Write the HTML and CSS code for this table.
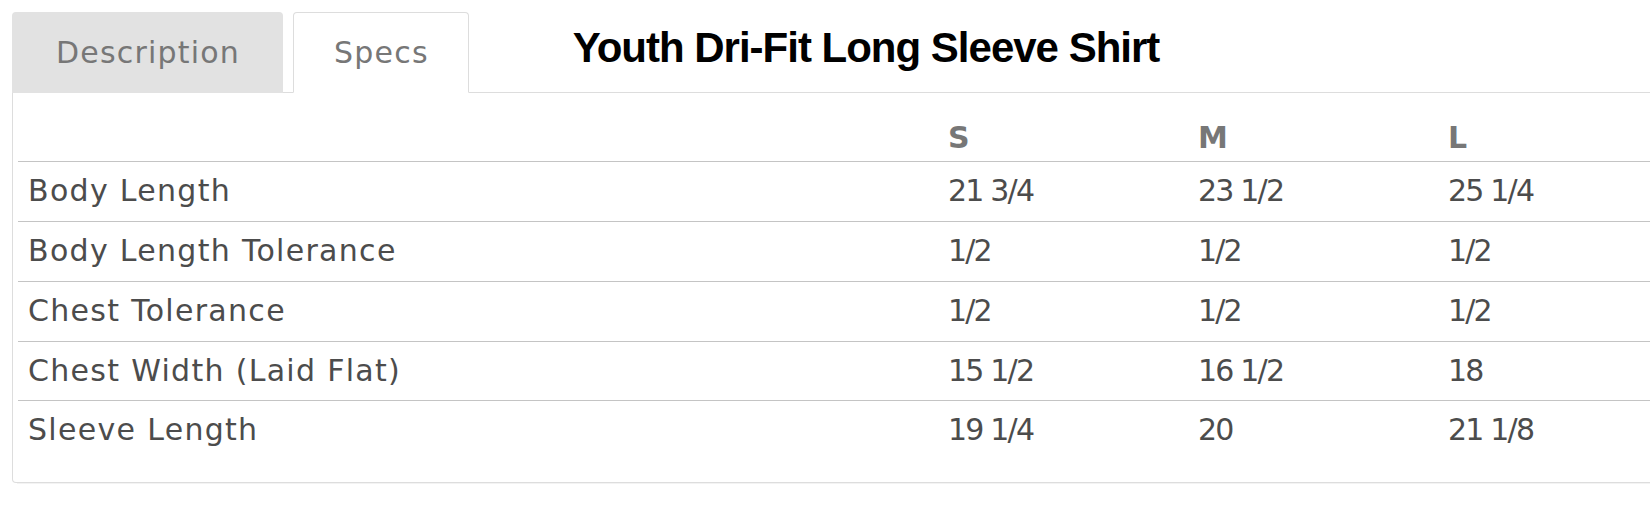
FILE: index.html
```html
<!DOCTYPE html>
<html lang="en">
<head>
<meta charset="UTF-8" />
<meta name="viewport" content="width=device-width, initial-scale=1.0" />
<title>Youth Dri-Fit Long Sleeve Shirt - Specs</title>
<link rel="stylesheet" href="styles.css">
</head>
<body>

<div class="producto">
  <div class="cabecera">
    <ul class="tabs">
      <li class="tab">Description</li>
      <li class="tab activa">Specs</li>
    </ul>
    <h2 class="titulo">Youth Dri-Fit Long Sleeve Shirt</h2>
  </div>

  <div class="panel">
    <table class="medidas">
      <colgroup>
        <col class="col-nombre"><col class="col-talla"><col class="col-talla"><col class="col-talla">
      </colgroup>
      <thead>
        <tr><th></th><th>S</th><th>M</th><th>L</th></tr>
      </thead>
      <tbody>
        <tr><td>Body Length</td><td class="num">21 3/4</td><td class="num">23 1/2</td><td class="num">25 1/4</td></tr>
        <tr><td>Body Length Tolerance</td><td class="num">1/2</td><td class="num">1/2</td><td class="num">1/2</td></tr>
        <tr><td>Chest Tolerance</td><td class="num">1/2</td><td class="num">1/2</td><td class="num">1/2</td></tr>
        <tr><td>Chest Width (Laid Flat)</td><td class="num">15 1/2</td><td class="num">16 1/2</td><td class="num">18</td></tr>
        <tr><td>Sleeve Length</td><td class="num">19 1/4</td><td class="num">20</td><td class="num">21 1/8</td></tr>
      </tbody>
    </table>
  </div>
</div>

</body>
</html>
```

FILE: styles.css
```css
html, body { overflow: hidden; }
body { margin: 0; padding: 12px; background: #fff; font-family: "DejaVu Sans", "Open Sans", sans-serif; }
.producto { width: 1682px; }

.cabecera { display: flex; align-items: flex-start; border-bottom: 1px solid #ddd; }
.tabs { display: flex; list-style: none; margin: 0 0 -1px 0; padding: 0; }
.tab { padding: 18px 42px 18px 43px; line-height: 43px; font-size: 30px; letter-spacing: 1.2px; color: #777; border: 1px solid transparent; border-radius: 4px 4px 0 0; margin-right: 10px; background: #e2e2e2; }
.tab.activa { padding: 18px 39px 18px 40px; background: #fff; border-color: #ddd; border-bottom-color: transparent; }
.titulo { margin: 12px 0 0 94px; font-family: "Liberation Sans", Arial, sans-serif; font-size: 42px; line-height: 48px; letter-spacing: -1px; font-weight: bold; color: #000; }

.panel { border: 1px solid #ddd; border-top: none; border-radius: 0 0 4px 4px; padding: 8px 5px 22px 5px; box-shadow: 0 6px 0 -5px #f3f3f3; }
.medidas { width: 1670px; border-collapse: collapse; table-layout: fixed; font-size: 30px; line-height: 1.428571; letter-spacing: 1.3px; color: #4c4c4c; }
.col-nombre { width: 920px; }
.col-talla { width: 250px; }
.medidas th, .medidas td { padding: 8px 10px; text-align: left; vertical-align: middle; white-space: nowrap; }
.medidas th { height: 51px; vertical-align: bottom; padding-bottom: 1px; color: #777; font-weight: bold; letter-spacing: 0.5px; border-bottom: 1px solid #c4c4c4; }
.medidas td { border-top: 1px solid #c4c4c4; }
.medidas td.num { letter-spacing: -1.8px; }
.medidas tbody tr:first-child td { border-top: none; }
```
